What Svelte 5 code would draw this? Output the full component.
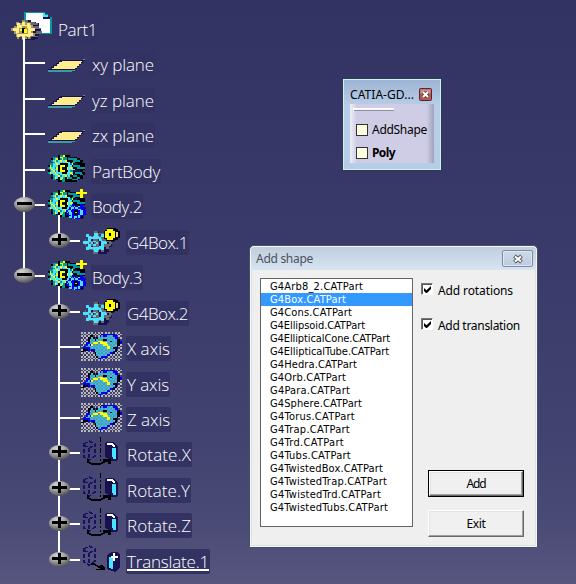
<script>
  const palette = {
    k: '#000', n: '#191050', t: '#009a9e', c: '#48e4ff', y: '#ffff00',
    b: '#0000f0', g: '#68686e', w: '#fff', f: '#ffec8a', o: '#a59a5a', s: '#b8b8b8',
    d: '#5f93a8', a: '#2cc4ec'
  };

  // Pixel maps: one letter per cell, a dot is transparent
  const body = [
    '......kttykkk.........',
    '...tttkyyttk.kkkk.....',
    '..ktcyktyttktttttkk...',
    '..tcytcyccykkkkttttkk.',
    '...tyccctccyckttkkkk..',
    '.ttccyckkkkkctynnkkkkk',
    'kytccckyyykkcckttttkkk',
    'tycctykynnkycyckkttttt',
    '.tyccykynnkyccyckkkkkk',
    'ktcytckyyykkcttnnnnkk.',
    'tyccyccckkkccyckttttkk',
    '.tkccytccyccctynkkkttk',
    '..ntccytccytckkttkkkk.',
    '..ktyckcytkcttkkkttkk.',
    '...ttkkyttkkkkttttk...',
    '......kkttkkkkkkk.....'
  ];
  const smallGear = [
    '....bb..kbb..',
    '..cb.cb.cbbb.',
    '..bccbccbbbbb',
    '.bbcbbbbccbb.',
    'bccbbkkkbccbb',
    '.bccbkckbccbb',
    'bbccbkkkbccbb',
    '.bbcbbbbcbbb.',
    '..ccbccbcbkn.',
    '...b.cbbbnn..'
  ];
  const shapeGear = [
    '.......ggn..........',
    '.......ccggggn......',
    '..cc...ccg.ccnggg...',
    '..cccgccccgccgnngn..',
    '...ccccccccgggnn....',
    '.g.ccngggnccggngggnn',
    'cccccgccggncccgggnn.',
    'ccccgcngcgnccccngg..',
    '.g.ccgccggnccggggn..',
    '..gccnggggcccgggnn..',
    '..cccccccccccngg....',
    '..ccggccccgccnnn....',
    '......gccgnggnnn....',
    '......gggnnnnnn.....'
  ];
  const rootGear = [
    '.......ooggnn......',
    '...oo..ffogggggn...',
    '...offoffoffoggggn.',
    '....fffffffffonnnn.',
    '..oofffooofffogggg.',
    'offffookkooffffgggg',
    'offffoykyyoffffnnnn',
    '..offookyyoffonngggg',
    '..ofooooooofffogggg',
    '...offffffffffonnn.',
    '...offoffoffogggg..',
    '....o..ffo.ognnnn..',
    '.......oonnnnnn....'
  ];
  // The surface is dithered: every other cell turns grey or muted
  const surface = [
    '........................',
    '............kbbbbbbb....',
    '.....kk....bcbbccccbb...',
    '....kkck.kccccccccccbb..',
    '....kccckcccckkccccccbk.',
    '....kcccccyyycccckccckkb',
    '...bbccyyycyyyycccccckkb',
    '...bcbyccccccyyyccccckk.',
    '..bccccccccccccyycccck..',
    '.bbbbccccccccccyycckkb..',
    '.kkkb.bbcccccccccccck...',
    'kk.....kcccccccccccbk...',
    '........kccccccccbbk....',
    '........kccccccbb.......',
    '.........kccbbb.........',
    '..........bb............',
    '...........b............'
  ].map((line, r) => [...line].map((ch, c) => {
    const odd = (r + c) % 2 === 1;
    if (ch === '.') return odd ? '.' : 's';
    if (ch === 'c') return odd ? 'a' : 'd';
    return ch;
  }).join(''));

  const rows = [
    { l: 0, h: 36, t: 'xy plane', w: 62, i: 'plane' },
    { l: 0, h: 35, t: 'yz plane', w: 62, i: 'plane' },
    { l: 0, h: 36, t: 'zx plane', w: 62, i: 'plane' },
    { l: 0, h: 35, t: 'PartBody', w: 68, i: 'body' },
    { l: 0, h: 36, t: 'Body.2', w: 50, i: 'body', m: '-' },
    { l: 1, h: 35, t: 'G4Box.1', w: 61, i: 'shape', m: '+', both: true },
    { l: 0, h: 36, t: 'Body.3', w: 50, i: 'body', m: '-' },
    { l: 1, h: 35, t: 'G4Box.2', w: 61, i: 'shape', m: '+' },
    { l: 1, h: 36, t: 'X axis', w: 43, i: 'surface' },
    { l: 1, h: 35, t: 'Y axis', w: 42, i: 'surface' },
    { l: 1, h: 35, t: 'Z axis', w: 43, i: 'surface' },
    { l: 1, h: 36, t: 'Rotate.X', w: 64, i: 'rotate', m: '+' },
    { l: 1, h: 35, t: 'Rotate.Y', w: 63, i: 'rotate', m: '+' },
    { l: 1, h: 36, t: 'Rotate.Z', w: 64, i: 'rotate', m: '+' },
    { l: 1, h: 36, t: 'Translate.1', w: 82, i: 'translate', m: '+' }
  ];

  const shapes = [
    ['G4Arb8_2', 93], ['G4Box', 76], ['G4Cons', 82], ['G4Ellipsoid', 95],
    ['G4EllipticalCone', 120], ['G4EllipticalTube', 119], ['G4Hedra', 87], ['G4Orb', 76],
    ['G4Para', 80], ['G4Sphere', 92], ['G4Torus', 85], ['G4Trap', 80], ['G4Trd', 74],
    ['G4Tubs', 81], ['G4TwistedBox', 113], ['G4TwistedTrap', 117], ['G4TwistedTrd', 111],
    ['G4TwistedTubs', 118]
  ];
  let selected = $state(1);
  let rotations = $state(true);
  let translation = $state(true);

  // Tracks a label so that it fills the given width
  function fit(node, width) {
    const natural = node.getBoundingClientRect().width;
    node.style.letterSpacing = (width - natural) / node.textContent.length + 'px';
  }
</script>

{#snippet cells(map, x, y, s)}
  {#each map as line, r}
    {#each line as ch, c}
      {#if palette[ch]}
        <rect x={x + Math.round(c * s)} y={y + Math.round(r * s)}
          width={Math.round((c + 1) * s) - Math.round(c * s)}
          height={Math.round((r + 1) * s) - Math.round(r * s)} fill={palette[ch]} />
      {/if}
    {/each}
  {/each}
{/snippet}

{#snippet ghost(x, y)}
  <path d="M{x + 1} {y + 3}l5 -3l6 3v12l-6 4l-5 -3zM{x + 1} {y + 4}l5 3l6 -3M{x + 6} {y + 7}v11" fill="none" stroke="#191060" stroke-width="1.500" stroke-dasharray="4 2" />
{/snippet}

{#snippet glyph(kind)}
  {#if kind === 'plane'}
    <path d="M48 25h24v2H48zM72 24h3v-2h2v-2h2v-2h2v-2h2v-2h2v2h-2v2h-2v2h-2v2h-2v2h-2v2h-3z" fill="#3b9ca4" />
    <path d="M60 15h25v1h-2v2h-2v2h-2v2h-2v2h-2v1H48v-1h3v-2h2v-2h3v-2h2v-2h2z" fill="#191050" />
    <path d="M62 16h20v1h-1v2h-2v2h-2v2h-2v1H52v-1h2v-2h3v-2h2v-2h3z" fill="#ffec8a" />
  {:else if kind === 'body' || kind === 'body+'}
    {@render cells(body, 48, 3, 1.69)}
    {#if kind === 'body+'}
      <path d="M80 2h3v3h4v2h-4v4h-3V7h-4V5h4z" fill="#ff0" />
      {@render cells(smallGear, 66, 17, 1.5)}
    {/if}
  {:else if kind === 'shape'}
    {@render cells(shapeGear, 83, 8, 1.62)}
    <path d="M107 5h9v1h2v2h2v7h-2v2h-3v1h-8v-2h-3V8h1V7h2z" fill="#000" />
    <path d="M107 6h6v2h2v7h-2v2h-6v-2h-2V8h2z" fill="#ff0" />
    <rect x="109" y="10" width="2" height="3" fill="#000" />
    <path d="M116 9h2v5h-2z" fill="#f4cba8" />
  {:else if kind === 'surface'}
    {@render cells(surface, 81, 3, 1.7)}
  {:else if kind === 'rotate'}
    {@render ghost(83, 6)}
    <path d="M100.500 2v24" fill="none" stroke="#000" stroke-dasharray="5 2 2 2" />
    <path d="M106 7h7l5 4v13l-2 2h-4l-7 -4V8z" fill="#191050" />
    <path d="M107 8h5l3 2v2h-2l-2-2h-4z" fill="#fff" />
    <path d="M112 13h4v11h-3v-2h-1z" fill="#48e4ff" />
    <path d="M88 24v3l4 2h8l6 -3" fill="none" stroke="#000" stroke-width="2" />
    <path d="M103 24h8v5h-3v-2h-5z" fill="#000" />
  {:else if kind === 'translate'}
    {@render ghost(83, 4)}
    <path d="M91 22h3l5 3h4" fill="none" stroke="#000" stroke-width="1.500" />
    <path d="M96 27h4v-4h2l3 3v2h-9z" fill="#000" />
    <path d="M107 13l5 -3h5l3 3v12l-5 5l-8 -3z" fill="#191050" />
    <path d="M109 15h4v12h-2v-1h-2z" fill="#48e4ff" />
    <path d="M113 11h2v3h3v2h-3v3h-2v-3h-2v-2h2z" fill="#fff" />
  {/if}
{/snippet}

{#snippet knob(x, sign)}
  <ellipse cx={x} cy="17.500" rx="10.500" ry="7.500" fill="url(#ball)" shape-rendering="auto" />
  <rect x={x - 7.5} y="15" width="15" height="3" fill="#000" />
  {#if sign === '+'}<rect x={x - 1.500} y="11" width="3" height="11" fill="#000" />{/if}
{/snippet}

<main>
  <svg class="defs" width="0" height="0">
    <defs>
      <radialGradient id="ball" cx=".38" cy=".25" r=".75">
        <stop offset="0" stop-color="#d4d4d4" /><stop offset=".45" stop-color="#a8a8a8" /><stop offset="1" stop-color="#555" />
      </radialGradient>
    </defs>
  </svg>
  <nav class="tree">
    <div class="row root">
      <svg width="57" height="45" shape-rendering="crispEdges">
        <path d="M24 12h21v2h3v3h4v17H24z" fill="#00999e" />
        <path d="M26 13h17v6h7v14H26z" fill="#fff" />
        <path d="M43 13h2v2h3v2h-5z" fill="#48e4ff" /><path d="M43 17h7v2h-7z" fill="#191050" />
        {@render cells(rootGear, 11, 20, 1.57)}
        <rect x="23" y="38" width="2" height="7" fill="#fff" />
      </svg>
      <span class="label"><span use:fit={39}>Part1</span></span>
    </div>
    {#each rows as row, i}
      <div class="row" style:height="{row.h}px">
        <svg width={row.l ? 126 : 91} height="36" shape-rendering="crispEdges">
          {#if i < 7}<rect x="23" y="0" width="2" height={i === 6 ? 18 : row.h} fill="#fff" />{/if}
          {#if row.l}<rect x="58" y="0" width="2" height={row.both || i === rows.length - 1 ? 18 : row.h} fill="#fff" />{/if}
          <rect x={row.l ? 60 : 25} y="17" width="20" height="2" fill="#fff" />
          {#if row.m}{@render knob(row.l ? 59.5 : 24.5, row.m)}{/if}
          {@render glyph(row.m === '-' ? 'body+' : row.i)}
          {#if row.m === '-'}<rect x="58" y="28" width="2" height="8" fill="#fff" />{/if}
        </svg>
        <span class="label" class:underlined={row.i === 'translate'}><span use:fit={row.w}>{row.t}</span></span>
      </div>
    {/each}
  </nav>

  <section class="toolbar">
    <header>
      <span use:fit={64}>CATIA-GD...</span>
      <svg width="13" height="13"><rect x=".5" y=".5" width="12" height="12" rx="1" fill="#b8564f" stroke="#542630" /><path d="M1.500 1.500h10v4h-10z" fill="#d8928b" /><path d="M4 4l5 5M9 4l-5 5" stroke="#444" stroke-width="3.600" /><path d="M4 4l5 5M9 4l-5 5" stroke="#fff" stroke-width="2" /></svg>
    </header>
    <div class="tools">
      <i class="grip"></i>
      <div class="tool"><i></i><span use:fit={55}>AddShape</span></div>
      <div class="tool"><i></i><b use:fit={23}>Poly</b></div>
    </div>
  </section>

  <section class="dialog">
    <header>
      <span use:fit={57}>Add shape</span>
      <div class="close"><svg width="12" height="10"><path d="M2.500 2l7 6M9.500 2l-7 6" stroke="#555b68" stroke-width="4" /><path d="M3 2.400l6 5.200M9 2.400l-6 5.200" stroke="#fff" stroke-width="2" /></svg></div>
    </header>
    <div class="content">
      <ul>
        {#each shapes as [name, w], i}
          <li class:selected={selected === i}><span use:fit={w}>{name}.CATPart</span></li>
        {/each}
      </ul>
      <div class="side">
        <div class="check"><i>{#if rotations}<svg width="9" height="9"><path d="M1 3v3l2 2h1l4-4V1L3.500 5.200z" /></svg>{/if}</i><span use:fit={75}>Add rotations</span></div>
        <div class="check"><i>{#if translation}<svg width="9" height="9"><path d="M1 3v3l2 2h1l4-4V1L3.500 5.200z" /></svg>{/if}</i><span use:fit={82}>Add translation</span></div>
        <div class="spacer"></div>
        <div class="frame"><div class="btn"><span use:fit={19}>Add</span></div></div>
        <div class="btn exit"><span use:fit={19}>Exit</span></div>
      </div>
    </div>
  </section>
</main>

<style>
  main {
    position: relative;
    width: 576px;
    height: 584px;
    overflow: hidden;
    background: linear-gradient(#333363, #3b3b6b 46%, #434371 76%, #4b4b77 90%, #56567f);
    font-family: "DejaVu Sans Condensed", "DejaVu Sans", sans-serif;
    font-stretch: condensed;
  }
  svg { display: block; flex: none; }
  .defs { position: absolute; }
  span, b { white-space: pre; }
  .tree { display: flex; flex-direction: column; }
  .row { display: flex; align-items: flex-start; }
  .root { height: 45px; }
  .root .label { margin-top: 17px; }
  .label {
    height: 25px;
    margin-top: 7px;
    padding: 0 1px;
    border-radius: 2px;
    background: #333363;
    color: #fff;
    font: 300 17px/25px "Open Sans", "Noto Sans", sans-serif;
  }
  .underlined span { text-decoration: underline; text-decoration-thickness: 2px; text-underline-offset: 1px; text-decoration-skip-ink: none; }
  .toolbar {
    position: absolute;
    left: 342px;
    top: 78px;
    box-sizing: border-box;
    width: 100px;
    height: 93px;
    padding: 1px 6px 0;
    border: 1px solid #333a45;
    box-shadow: inset 0 0 0 1px #c9f2fb;
    background: linear-gradient(#9cb3d3, #b8cee8 30%, #b7cde7);
    font: 12px "Noto Sans", sans-serif;
  }
  .toolbar header { display: flex; height: 24px; padding: 0 1px; align-items: flex-start; justify-content: space-between; line-height: 30px; }
  .toolbar header svg { margin: 8px 2px 0 0; }
  .tools {
    box-sizing: border-box;
    width: 84px;
    height: 59px;
    margin-left: 1px;
    padding: 4px 0 0 6px;
    background: linear-gradient(90deg, #eeeef5, #cfcde6 8%, #cfcde6 91%, #9fa2bc);
  }
  .grip { display: block; box-sizing: border-box; width: 41px; height: 3px; margin: 0 0 7px -3px; border: solid #fff; border-width: 1px 0 0 1px; background: linear-gradient(#f5f5f8 50%, #8d8fa3 50%); }
  .tool { display: flex; align-items: center; height: 23px; gap: 4px; }
  .tool i { box-sizing: border-box; width: 12px; height: 12px; border: 1px solid #333; background: #ffffe1; }
  .tool span, .tool b { line-height: 24px; }
  .dialog {
    position: absolute;
    left: 249px;
    top: 245px;
    box-sizing: border-box;
    width: 289px;
    height: 303px;
    padding: 1px;
    border: 1px solid #4a4f62;
    border-radius: 5px 5px 0 0;
    background: #efefef;
    box-shadow: inset 0 0 0 1px #f4f7fa, inset 0 0 0 2px #d8e2ee;
    font-size: 11px;
  }
  .dialog header {
    display: flex;
    justify-content: space-between;
    height: 23px;
    padding: 0 3px 0 5px;
    border-radius: 4px 4px 0 0;
    background: linear-gradient(#bfcddd, #d8e4f1);
    color: #49525e;
    font: 12px/24px "Noto Sans", sans-serif;
  }
  .close { display: flex; align-items: center; justify-content: center; box-sizing: border-box; width: 31px; height: 17px; margin-top: 3px; border: 1px solid #7e8ba4; border-radius: 2px; background: linear-gradient(#cfdae8, #bccbdd); box-shadow: inset 0 0 0 1px #dde6f1; }
  .content { display: flex; padding: 8px 12px 0 9px; }
  ul { box-sizing: border-box; width: 153px; height: 249px; margin: 0; padding: 1px 0 0; list-style: none; border: 1px solid #646464; background: #fff; }
  li { height: 13px; padding-left: 9px; line-height: 14px; color: #000; }
  li.selected { background: #3399ff; color: #fff; }
  .side { display: flex; flex-direction: column; flex: 1; padding: 5px 0 0 8px; font: 12px "Noto Sans", sans-serif; }
  .check { display: flex; align-items: flex-start; height: 35px; gap: 5px; line-height: 16px; }
  .check i { box-sizing: border-box; width: 12px; height: 12px; border: 1px solid; border-color: #777 #fff #fff #777; box-shadow: inset 1px 1px #555; background: #fff; padding: 1px; }
  .spacer { height: 117px; }
  .frame { box-sizing: border-box; width: 96px; height: 27px; margin-left: 7px; border: 1px solid #000; }
  .btn { box-sizing: border-box; height: 25px; border: 1px solid; border-color: #fff #696969 #696969 #fff; box-shadow: inset -1px -1px #a0a0a0, inset 1px 1px #e3e3e3; background: #f0f0f0; text-align: center; line-height: 24px; }
  .exit { width: 96px; height: 27px; margin: 13px 0 0 7px; line-height: 26px; }
</style>
